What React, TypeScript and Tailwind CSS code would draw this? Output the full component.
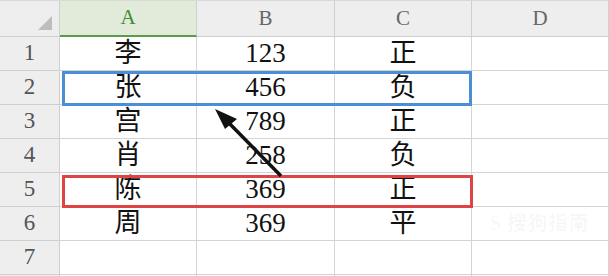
import React from "react";

const cols = ["A", "B", "C", "D"];

const rows: string[][] = [
  ["李", "123", "正", ""],
  ["张", "456", "负", ""],
  ["宫", "789", "正", ""],
  ["肖", "258", "负", ""],
  ["陈", "369", "正", ""],
  ["周", "369", "平", ""],
  ["", "", "", ""],
];

const font = { fontFamily: '"Liberation Serif", "Noto Sans CJK SC", serif' };

const Arrow = () => (
  <svg
    className="absolute left-0 top-0 pointer-events-none"
    width={609}
    height={276}
    viewBox="0 0 609 276"
  >
    <line x1={281} y1={176} x2={226} y2={120} stroke="#111" strokeWidth={3.5} />
    <polygon points="215,109 237,119 225,129" fill="#111" />
  </svg>
);

export default function App() {
  return (
    <div
      className="relative w-[609px] h-[276px] overflow-hidden bg-white"
      style={font}
    >
      <div className="grid grid-cols-[60px_137px_138px_137px_137px] grid-rows-[36px_repeat(8,34px)] border-t border-[#d9d9d9]">
        {/* corner */}
        <div className="relative bg-[#eeeeee] border-r border-b border-[#cfcfcf]">
          <div className="absolute right-[7px] bottom-[6px] w-0 h-0 border-l-[14px] border-l-transparent border-b-[14px] border-b-[#bdbdbd]" />
        </div>
        {cols.map((c) => (
          <div
            key={c}
            className={
              c === "A"
                ? "flex items-center justify-center bg-[#e2ebd9] border-r border-[#cfcfcf] border-b-2 border-b-[#5d9a4a] text-[#3f8a34] text-[21px]"
                : "flex items-center justify-center bg-[#eeeeee] border-r border-b border-[#cfcfcf] text-[#666] text-[21px]"
            }
          >
            {c}
          </div>
        ))}
        {rows.map((r, i) => (
          <React.Fragment key={i}>
            <div className="flex items-center justify-center bg-[#eeeeee] border-r border-b border-[#cfcfcf] text-[#555] text-[23px]">
              {i + 1}
            </div>
            {r.map((v, j) => (
              <div
                key={j}
                className="flex items-center justify-center border-r border-b border-[#d4d4d4] text-[#111] text-[27px] leading-none"
              >
                {v}
              </div>
            ))}
          </React.Fragment>
        ))}
        {/* next row, only its top edge shows */}
        <div className="bg-[#eeeeee] border-r border-[#cfcfcf]" />
        <div className="border-r border-[#d4d4d4]" />
        <div className="border-r border-[#d4d4d4]" />
        <div className="border-r border-[#d4d4d4]" />
        <div className="border-r border-[#d4d4d4]" />
      </div>

      {/* highlight boxes */}
      <div className="absolute left-[62px] top-[71px] w-[410px] h-[35px] border-[3px] border-[#4a8fd6]" />
      <div className="absolute left-[62px] top-[175px] w-[411px] h-[33px] border-[3px] border-[#e04343]" />

      <Arrow />

      <div className="absolute right-[20px] bottom-[38px] text-[20px] text-[#000]/[0.035] font-bold tracking-wide">
        S 搜狗指南
      </div>
    </div>
  );
}
